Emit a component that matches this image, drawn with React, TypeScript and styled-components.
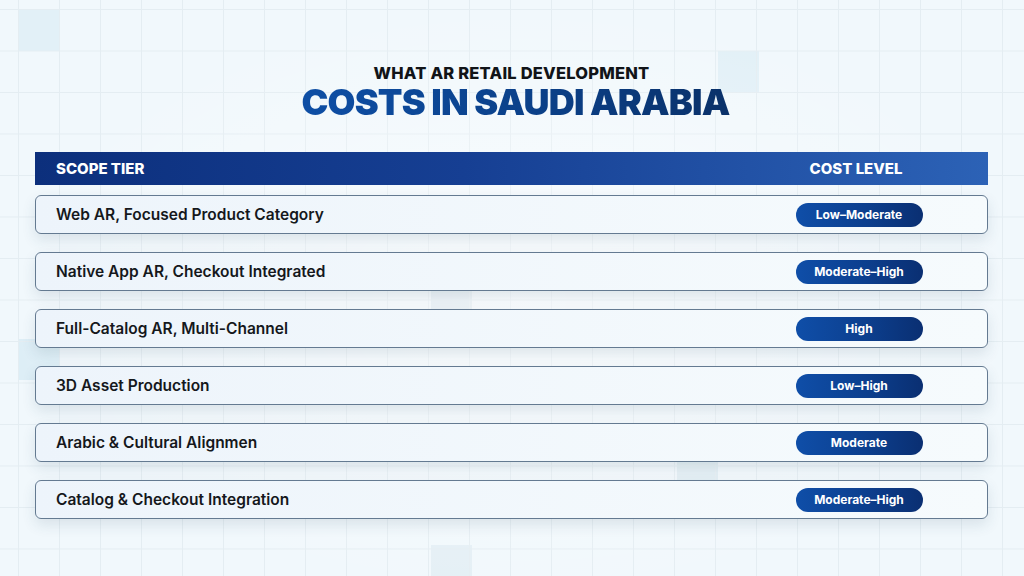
import React from "react";
import styled, { createGlobalStyle } from "styled-components";

const Global = createGlobalStyle`
  html, body { margin: 0; padding: 0; }
  body { font-family: Inter, "Noto Sans", sans-serif; }
`;

const tile = (x: number, y: number, c = "#e2f0f7") =>
  `linear-gradient(${c}, ${c}) ${x}px ${y}px / 41px 41px no-repeat`;

const Page = styled.div`
  width: 1024px;
  height: 576px;
  box-sizing: border-box;
  overflow: hidden;
  padding: 64px 36px 0 35px;
  display: flex;
  flex-direction: column;
  align-items: stretch;
  background:
    radial-gradient(ellipse 520px 300px at 520px 300px, rgba(255,255,255,0.55), rgba(255,255,255,0) 100%),
    linear-gradient(to right, #e4edf2 1px, transparent 1px) 18px 0 / 41px 41px,
    linear-gradient(to bottom, #e4edf2 1px, transparent 1px) 0 9px / 41px 41.5px,
    ${tile(19, 10)},
    ${tile(718, 51)},
    ${tile(19, 339, "#ddeef6")},
    ${tile(431, 545, "#e4eff5")},
    ${tile(677, 462, "#e0edf3")},
    ${tile(431, 280, "#dde9f0")},
    #f1f8fc;
`;

const TitleBlock = styled.header`
  display: flex;
  flex-direction: column;
  align-items: center;
  gap: 1px;
`;

const Kicker = styled.div`
  font-size: 16.5px;
  line-height: 18px;
  font-weight: 800;
  color: #111418;
  letter-spacing: 0.2px;
`;

const Headline = styled.h1`
  margin: 0;
  padding-left: 8px;
  font-size: 36px;
  line-height: 38px;
  font-weight: 900;
  letter-spacing: -0.8px;
  background: linear-gradient(90deg, #0e4fa6 0%, #0b3f86 60%, #0a3169 100%);
  -webkit-background-clip: text;
  background-clip: text;
  color: transparent;
`;

const Table = styled.section`
  margin-top: 31px;
  display: flex;
  flex-direction: column;
  gap: 18px;
`;

const HeadRow = styled.div`
  height: 33px;
  display: grid;
  grid-template-columns: 1fr 190px;
  align-items: center;
  padding: 0 37px 0 21px;
  margin-bottom: -8px;
  background: linear-gradient(90deg, #0c2f7c 0%, #163f93 45%, #2c62b6 100%);
  color: #ffffff;
  font-size: 15px;
  font-weight: 800;
  letter-spacing: 0;
`;

const HeadCell = styled.div<{ $center?: boolean }>`
  text-align: ${(p) => (p.$center ? "center" : "left")};
`;

const Row = styled.div`
  height: 39px;
  box-sizing: border-box;
  display: grid;
  grid-template-columns: 1fr 190px;
  align-items: center;
  padding: 0 33px 0 20px;
  border: 1.5px solid #647a91;
  border-radius: 6px;
  background: linear-gradient(90deg, #edf4fb 0%, #f6fbfd 100%);
  box-shadow: 0 6px 14px rgba(40, 70, 100, 0.12);
`;

const Label = styled.div`
  font-size: 15.5px;
  font-weight: 600;
  color: #15181c;
  letter-spacing: 0;
`;

const PillCell = styled.div`
  display: flex;
  justify-content: center;
`;

const Pill = styled.span`
  width: 127px;
  height: 24px;
  border-radius: 12px;
  display: flex;
  align-items: center;
  justify-content: center;
  background: linear-gradient(90deg, #0f4ea8 0%, #0c3f8e 55%, #0a2f72 100%);
  color: #ffffff;
  font-size: 12px;
  font-weight: 700;
  letter-spacing: 0;
`;

const rows = [
  ["Web AR, Focused Product Category", "Low–Moderate"],
  ["Native App AR, Checkout Integrated", "Moderate–High"],
  ["Full-Catalog AR, Multi-Channel", "High"],
  ["3D Asset Production", "Low–High"],
  ["Arabic & Cultural Alignmen", "Moderate"],
  ["Catalog & Checkout Integration", "Moderate–High"],
];

export default function App() {
  return (
    <>
      <Global />
      <Page>
        <TitleBlock>
          <Kicker>WHAT AR RETAIL DEVELOPMENT</Kicker>
          <Headline>COSTS IN SAUDI ARABIA</Headline>
        </TitleBlock>
        <Table>
          <HeadRow>
            <HeadCell>SCOPE TIER</HeadCell>
            <HeadCell $center>COST LEVEL</HeadCell>
          </HeadRow>
          {rows.map(([label, cost]) => (
            <Row key={label}>
              <Label>{label}</Label>
              <PillCell>
                <Pill>{cost}</Pill>
              </PillCell>
            </Row>
          ))}
        </Table>
      </Page>
    </>
  );
}
